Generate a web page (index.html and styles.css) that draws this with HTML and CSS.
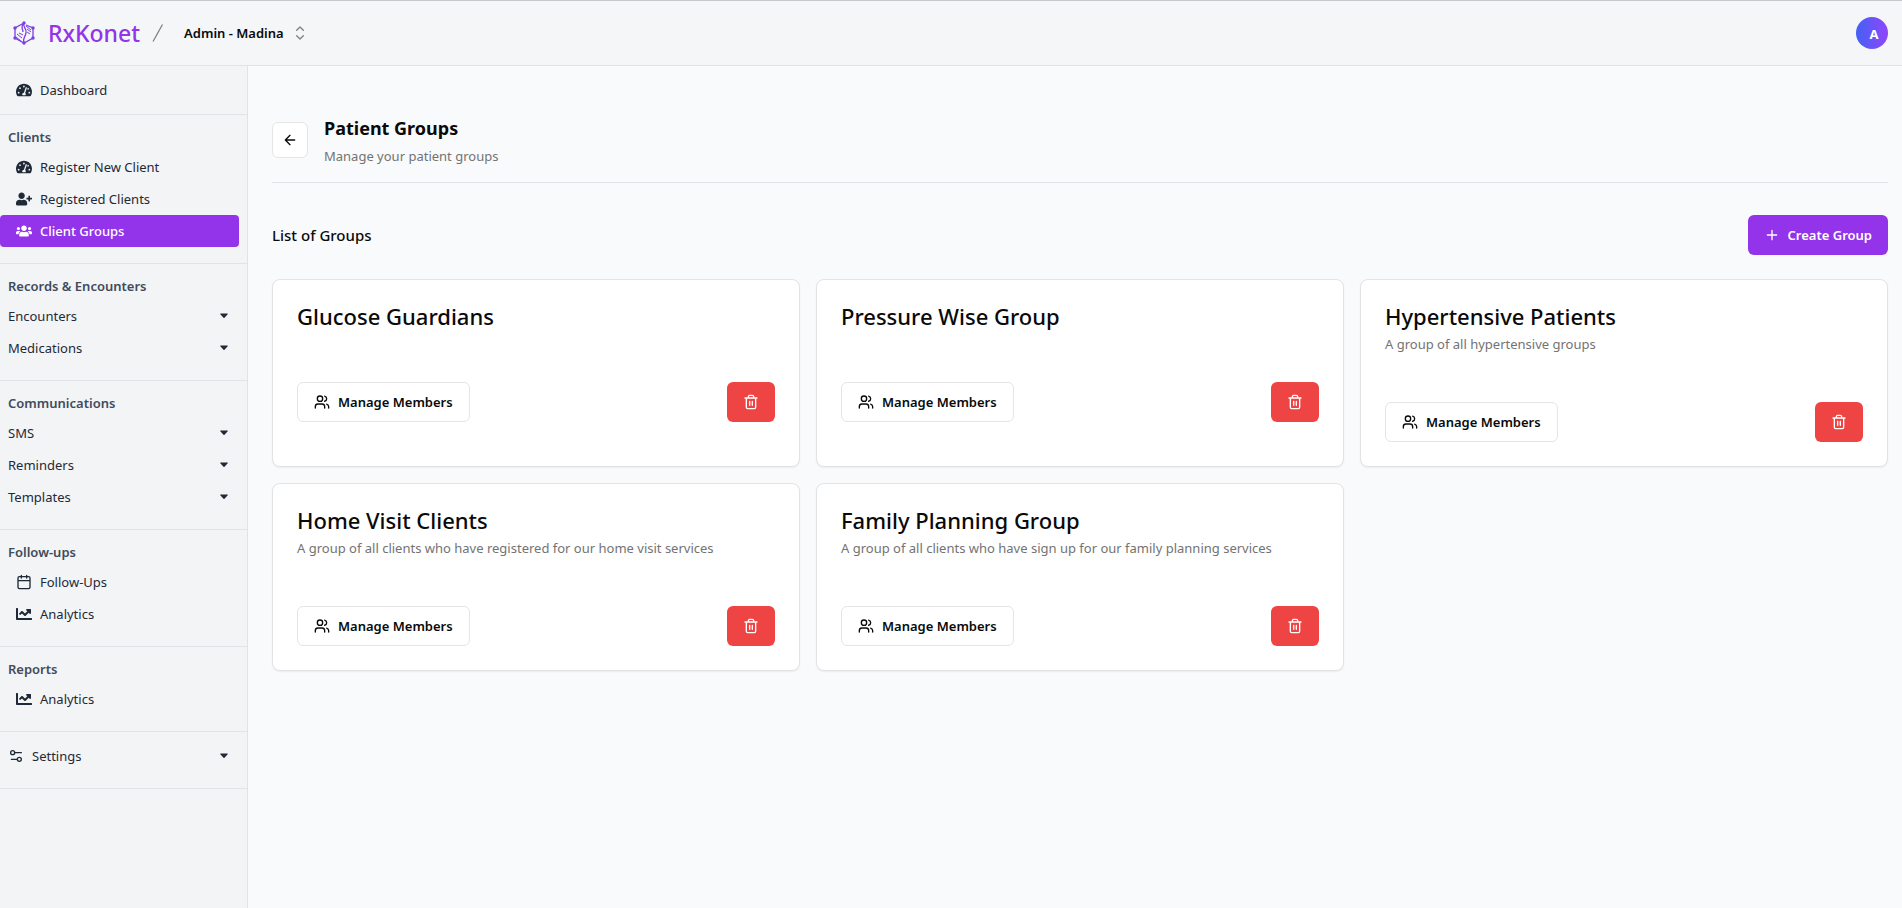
FILE: index.html
```html
<!DOCTYPE html>
<html lang="en">
<head>
<meta charset="utf-8">
<title>RxKonet - Patient Groups</title>
<link rel="stylesheet" href="styles.css">
</head>
<body>
<svg class="sprite" aria-hidden="true">
  <symbol id="gauge" viewBox="0 0 576 512"><path fill="currentColor" d="M288 32C129 32 0 161 0 320c0 53 14 102 39 145 6 9 16 15 27 15h444c11 0 21-6 27-15 25-43 39-92 39-145C576 161 447 32 288 32zm0 64c15 0 27 10 31 23-2 5-5 9-6 14l-9 28c-5 3-10 6-16 6-18 0-32-14-32-32s14-39 32-39zM96 384c-18 0-32-14-32-32s14-32 32-32 32 14 32 32-14 32-32 32zm48-160c-18 0-32-14-32-32s14-32 32-32 32 14 32 32-14 32-32 32zm247-40l-61 184c13 11 22 28 22 48 0 12-3 23-9 32H233c-6-9-9-20-9-32 0-34 27-62 61-64l61-183c4-13 18-20 30-16 13 4 20 18 15 31zm14 43l16-46c3-1 7-2 11-2 18 0 32 14 32 32s-14 32-32 32c-11 0-21-6-27-16zm75 157c-18 0-32-14-32-32s14-32 32-32 32 14 32 32-14 32-32 32z"/></symbol>
  <symbol id="user-plus" viewBox="0 0 640 512"><path fill="currentColor" d="M624 208h-64v-64c0-9-7-16-16-16h-32c-9 0-16 7-16 16v64h-64c-9 0-16 7-16 16v32c0 9 7 16 16 16h64v64c0 9 7 16 16 16h32c9 0 16-7 16-16v-64h64c9 0 16-7 16-16v-32c0-9-7-16-16-16zM224 256c71 0 128-57 128-128S295 0 224 0 96 57 96 128s57 128 128 128zm90 32h-17c-22 10-47 16-73 16s-51-6-73-16h-17C60 288 0 348 0 422v42c0 27 21 48 48 48h352c27 0 48-21 48-48v-42c0-74-60-134-134-134z"/></symbol>
  <symbol id="users-solid" viewBox="0 0 640 512"><path fill="currentColor" d="M96 224c35 0 64-29 64-64s-29-64-64-64-64 29-64 64 29 64 64 64zm448 0c35 0 64-29 64-64s-29-64-64-64-64 29-64 64 29 64 64 64zm32 32h-64c-18 0-34 7-45 19 40 22 69 62 75 109h66c18 0 32-14 32-32v-32c0-35-29-64-64-64zm-256 0c62 0 112-50 112-112S382 32 320 32 208 82 208 144s50 112 112 112zm77 32h-8c-21 10-44 16-69 16s-48-6-69-16h-8c-64 0-115 52-115 115v29c0 27 21 48 48 48h288c27 0 48-21 48-48v-29c0-63-51-115-115-115zm-224-13c-11-12-27-19-45-19H64c-35 0-64 29-64 64v32c0 18 14 32 32 32h66c6-47 35-87 75-109z"/></symbol>
  <symbol id="chart" viewBox="0 0 512 512"><path fill="currentColor" d="M496 384H64V80c0-9-7-16-16-16H16C7 64 0 71 0 80v336c0 18 14 32 32 32h464c9 0 16-7 16-16v-32c0-9-7-16-16-16zM464 96H346c-21 0-32 26-17 41l32 32-73 73-73-73c-13-13-33-13-46 0l-68 68c-6 6-6 17 0 23l23 22c6 7 16 7 22 0l46-46 73 73c13 13 33 13 46 0l96-96 32 32c15 15 41 5 41-17V112c0-9-7-16-16-16z"/></symbol>
  <symbol id="calendar" viewBox="0 0 24 24"><path fill="none" stroke="currentColor" stroke-width="2" stroke-linecap="round" stroke-linejoin="round" d="M8 2v4M16 2v4M5 4h14a2 2 0 0 1 2 2v14a2 2 0 0 1-2 2H5a2 2 0 0 1-2-2V6a2 2 0 0 1 2-2zM3 10h18"/></symbol>
  <symbol id="settings" viewBox="0 0 24 24"><g fill="none" stroke="currentColor" stroke-width="2" stroke-linecap="round"><path d="M20 7h-9M14 17H5"/><circle cx="17" cy="17" r="3"/><circle cx="7" cy="7" r="3"/></g></symbol>
  <symbol id="caret" viewBox="0 0 8 6"><path fill="currentColor" d="M.6.5h6.8q.8.2.3.8L4.500 4.800q-.5.4-1 0L.3 1.300Q-.2.7.6.5z"/></symbol>
  <symbol id="users" viewBox="0 0 24 24"><g fill="none" stroke="currentColor" stroke-width="2" stroke-linecap="round" stroke-linejoin="round"><path d="M16 21v-2a4 4 0 0 0-4-4H6a4 4 0 0 0-4 4v2"/><circle cx="9" cy="7" r="4"/><path d="M22 21v-2a4 4 0 0 0-3-3.870M16 3.130a4 4 0 0 1 0 7.750"/></g></symbol>
  <symbol id="trash" viewBox="0 0 24 24"><path fill="none" stroke="currentColor" stroke-width="2" stroke-linecap="round" stroke-linejoin="round" d="M3 6h18M19 6v14a2 2 0 0 1-2 2H7a2 2 0 0 1-2-2V6M8 6V4a2 2 0 0 1 2-2h4a2 2 0 0 1 2 2v2M10 11v6M14 11v6"/></symbol>
  <symbol id="plus" viewBox="0 0 24 24"><path fill="none" stroke="currentColor" stroke-width="2" stroke-linecap="round" d="M5 12h14M12 5v14"/></symbol>
  <symbol id="arrow-left" viewBox="0 0 24 24"><path fill="none" stroke="currentColor" stroke-width="2" stroke-linecap="round" stroke-linejoin="round" d="m12 19-7-7 7-7M19 12H5"/></symbol>
  <symbol id="selector" viewBox="0 0 24 24"><path fill="none" stroke="currentColor" stroke-width="2" stroke-linecap="round" stroke-linejoin="round" d="m7 8 5-5 5 5M7 16l5 5 5-5"/></symbol>
</svg>

<header class="topbar">
  <a class="brand" href="#">
    <svg class="logo" viewBox="0 0 24 24" aria-hidden="true">
      <g fill="none" stroke="currentColor" stroke-width="1.300">
        <path d="M11 2.500 3 7v10l9 5 9-5V7l-7-3"/>
        <path d="M12 2c-2 4 3 5 2 10s-4 6-2 10"/>
        <path d="M12 2c-4 4-1 6-1 9"/>
      </g>
      <path fill="none" stroke="currentColor" stroke-width="1" d="M14 5l5 4M15 8l4 3M15 11l3 2M5 13l5 4M4 16l5 4M7 12l4 2"/>
      <g fill="currentColor"><circle cx="12" cy="2" r="1.700"/><circle cx="3" cy="7" r="1.700"/><circle cx="3" cy="17" r="1.700"/><circle cx="12" cy="22" r="1.700"/><circle cx="21" cy="17" r="1.700"/><circle cx="21" cy="7" r="1.700"/></g>
    </svg>
    <span class="brand-name">RxKonet</span>
  </a>
  <svg class="slash" viewBox="0 0 12 18" aria-hidden="true"><path d="M1 17.500 10.500.5" fill="none" stroke="currentColor" stroke-width="1.200"/></svg>
  <button class="switcher" type="button">Admin - Madina <svg class="selector"><use href="#selector"/></svg></button>
  <button class="avatar" type="button" aria-label="Account A">A</button>
</header>

<div class="shell">
  <nav class="sidebar" aria-label="Main">
    <section class="group plain tight">
      <a class="item" href="#"><svg class="icon"><use href="#gauge"/></svg>Dashboard</a>
    </section>
    <section class="group">
      <h2 class="heading">Clients</h2>
      <a class="item" href="#"><svg class="icon"><use href="#gauge"/></svg>Register New Client</a>
      <a class="item" href="#"><svg class="icon"><use href="#user-plus"/></svg>Registered Clients</a>
      <a class="item active" href="#" aria-current="page"><svg class="icon"><use href="#users-solid"/></svg>Client Groups</a>
    </section>
    <section class="group">
      <h2 class="heading">Records &amp; Encounters</h2>
      <button class="item toggle" type="button">Encounters<svg class="caret"><use href="#caret"/></svg></button>
      <button class="item toggle" type="button">Medications<svg class="caret"><use href="#caret"/></svg></button>
    </section>
    <section class="group">
      <h2 class="heading">Communications</h2>
      <button class="item toggle" type="button">SMS<svg class="caret"><use href="#caret"/></svg></button>
      <button class="item toggle" type="button">Reminders<svg class="caret"><use href="#caret"/></svg></button>
      <button class="item toggle" type="button">Templates<svg class="caret"><use href="#caret"/></svg></button>
    </section>
    <section class="group">
      <h2 class="heading">Follow-ups</h2>
      <a class="item" href="#"><svg class="icon"><use href="#calendar"/></svg>Follow-Ups</a>
      <a class="item" href="#"><svg class="icon"><use href="#chart"/></svg>Analytics</a>
    </section>
    <section class="group">
      <h2 class="heading">Reports</h2>
      <a class="item" href="#"><svg class="icon"><use href="#chart"/></svg>Analytics</a>
    </section>
    <section class="group plain">
      <button class="item toggle" type="button"><svg class="icon"><use href="#settings"/></svg>Settings<svg class="caret"><use href="#caret"/></svg></button>
    </section>
  </nav>

  <main class="main">
    <div class="page-head">
      <button class="btn back" type="button" aria-label="Back"><svg class="icon"><use href="#arrow-left"/></svg></button>
      <div>
        <h1 class="page-title">Patient Groups</h1>
        <p class="muted">Manage your patient groups</p>
      </div>
    </div>
    <div class="list-head">
      <h2 class="list-title">List of Groups</h2>
      <button class="btn primary" type="button"><svg class="icon"><use href="#plus"/></svg>Create Group</button>
    </div>
    <div class="cards">
      <article class="card">
        <h3 class="card-title">Glucose Guardians</h3>
        <p class="muted"></p>
        <div class="actions">
          <button class="btn" type="button"><svg class="icon"><use href="#users"/></svg>Manage Members</button>
          <button class="btn danger" type="button" aria-label="Delete group"><svg class="icon"><use href="#trash"/></svg></button>
        </div>
      </article>
      <article class="card">
        <h3 class="card-title">Pressure Wise Group</h3>
        <p class="muted"></p>
        <div class="actions">
          <button class="btn" type="button"><svg class="icon"><use href="#users"/></svg>Manage Members</button>
          <button class="btn danger" type="button" aria-label="Delete group"><svg class="icon"><use href="#trash"/></svg></button>
        </div>
      </article>
      <article class="card">
        <h3 class="card-title">Hypertensive Patients</h3>
        <p class="muted">A group of all hypertensive groups</p>
        <div class="actions">
          <button class="btn" type="button"><svg class="icon"><use href="#users"/></svg>Manage Members</button>
          <button class="btn danger" type="button" aria-label="Delete group"><svg class="icon"><use href="#trash"/></svg></button>
        </div>
      </article>
      <article class="card">
        <h3 class="card-title">Home Visit Clients</h3>
        <p class="muted">A group of all clients who have registered for our home visit services</p>
        <div class="actions">
          <button class="btn" type="button"><svg class="icon"><use href="#users"/></svg>Manage Members</button>
          <button class="btn danger" type="button" aria-label="Delete group"><svg class="icon"><use href="#trash"/></svg></button>
        </div>
      </article>
      <article class="card">
        <h3 class="card-title">Family Planning Group</h3>
        <p class="muted">A group of all clients who have sign up for our family planning services</p>
        <div class="actions">
          <button class="btn" type="button"><svg class="icon"><use href="#users"/></svg>Manage Members</button>
          <button class="btn danger" type="button" aria-label="Delete group"><svg class="icon"><use href="#trash"/></svg></button>
        </div>
      </article>
    </div>
  </main>
</div>
</body>
</html>
```
FILE: styles.css
```css
* { box-sizing: border-box; }

body {
  margin: 0;
  min-height: 100vh;
  display: flex;
  flex-direction: column;
  background: #f9fafc;
  color: #0a0a0a;
  font: 13px/20px "Noto Sans", "Open Sans", sans-serif;
}

h1, h2, h3, p { margin: 0; }
a { color: inherit; text-decoration: none; }
button { font: inherit; color: inherit; background: none; border: 0; padding: 0; margin: 0; cursor: pointer; }
svg { display: block; flex: none; }
.sprite { position: absolute; width: 0; height: 0; }
.icon { width: 16px; height: 16px; }

.topbar {
  display: flex;
  align-items: center;
  min-height: 66px;
  padding: 0 14px 0 12px;
  background: #f5f6f8;
  border-top: 1px solid #c8c9cc;
  border-bottom: 1px solid #e2e3e6;
}
.brand { display: flex; align-items: center; gap: 12px; color: #9333ea; }
.logo { width: 24px; height: 24px; color: #7c3fe0; }
.brand-name { font-size: 23px; line-height: 32px; font-weight: 500; }
.slash { width: 12px; height: 18px; margin: 0 20px 0 12px; color: #7a7a7d; }
.switcher { display: flex; align-items: center; gap: 8px; font-weight: 600; }
.selector { width: 16px; height: 16px; color: #808085; }
.avatar {
  width: 32px;
  height: 32px;
  margin-left: auto;
  padding: 2px 0 0 4px;
  border-radius: 50%;
  background: linear-gradient(90deg, #4361f5, #9146fb);
  color: #fff;
  font-weight: 700;
}

.shell { display: flex; flex: 1; }

.sidebar {
  flex: none;
  width: 248px;
  background: #f3f4f6;
  border-right: 1px solid #e2e3e6;
  color: #1f2937;
}
.group { padding: 12px 8px 16px 0; border-bottom: 1px solid #e2e3e6; }
.group.plain { padding-top: 8px; }
.group.tight { padding-bottom: 8px; }
.heading { margin-bottom: 4px; padding-left: 8px; font-size: 13px; line-height: 20px; font-weight: 600; color: #414b5b; }
.item {
  display: flex;
  align-items: center;
  gap: 8px;
  width: 100%;
  min-height: 32px;
  padding: 0 11px 0 16px;
  border-radius: 4px;
}
.item.toggle { padding-left: 8px; }
.item.active { background: #9333ea; color: #fff; font-weight: 500; }
.caret { width: 8px; height: 6px; margin-left: auto; }

.main { flex: 1; min-width: 0; padding: 48px 14px 24px 24px; }

.page-head {
  display: flex;
  align-items: center;
  gap: 16px;
  padding-bottom: 16px;
  border-bottom: 1px solid #e2e3e6;
}
.page-title { margin-bottom: 4px; font-size: 18px; line-height: 28px; font-weight: 700; }
.muted { color: #737373; }

.btn {
  display: flex;
  align-items: center;
  justify-content: center;
  gap: 8px;
  min-height: 40px;
  padding: 0 16px;
  border: 1px solid #e5e5e5;
  border-radius: 6px;
  background: #fff;
  font-weight: 600;
}
.btn.back { width: 36px; min-height: 36px; padding: 0; }
.btn.primary { border: 0; background: #9333ea; color: #fff; }
.btn.danger { border: 0; background: #ef4444; color: #fff; }

.list-head { display: flex; align-items: center; justify-content: space-between; padding: 32px 0 24px; }
.list-title { font-size: 15px; line-height: 24px; font-weight: 500; }

.cards { display: grid; grid-template-columns: repeat(3, minmax(0, 1fr)); gap: 16px; }
.card {
  display: flex;
  flex-direction: column;
  min-height: 188px;
  padding: 24px;
  background: #fff;
  border: 1px solid #e2e3e6;
  border-radius: 8px;
  box-shadow: 0 1px 2px rgba(0, 0, 0, .06);
}
.card-title { margin-bottom: 6px; font-size: 22px; line-height: 24px; font-weight: 500; }
.actions { display: flex; align-items: center; justify-content: space-between; margin-top: 48px; }
```
